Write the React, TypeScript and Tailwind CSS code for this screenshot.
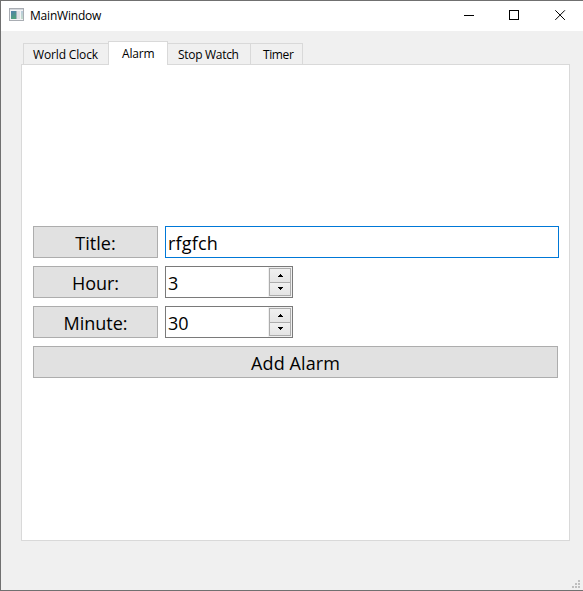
import React from "react";

function AppIcon() {
  return (
    <svg width="15" height="13" viewBox="0 0 15 13" shapeRendering="crispEdges">
      <defs>
        <linearGradient id="pane" x1="0" y1="0" x2="0.4" y2="1">
          <stop offset="0" stopColor="#4f7fae" />
          <stop offset="1" stopColor="#4fa07c" />
        </linearGradient>
        <linearGradient id="side" x1="0" y1="0" x2="0" y2="1">
          <stop offset="0" stopColor="#b9cbdc" />
          <stop offset="1" stopColor="#c3dccb" />
        </linearGradient>
      </defs>
      <rect width="15" height="13" fill="#a9adb3" />
      <rect x="1" y="1" width="13" height="11" fill="#f2f3f5" />
      <rect x="1" y="1" width="13" height="1" fill="#d3d7dc" />
      <rect x="2" y="3" width="5" height="8" fill="url(#pane)" />
      <rect x="7" y="3" width="1" height="8" fill="#9fb3bd" />
      <rect x="8" y="3" width="3" height="8" fill="#dfe1e4" />
      <rect x="12" y="3" width="2" height="8" fill="url(#side)" />
    </svg>
  );
}

function TitleBar() {
  return (
    <header className="flex h-[30px] bg-white">
      <div className="flex flex-1 pt-[7px] pl-2">
        <AppIcon />
        <span className="ml-1.5 h-4 text-xs leading-4 tracking-[-0.2px]">MainWindow</span>
      </div>
      <svg className="mt-[9px] mr-[17px] shrink-0" width="103" height="11" viewBox="0 0 103 11" fill="none" stroke="#000">
        <path d="M1 5.5h10M46.5.5h9v9h-9z" shapeRendering="crispEdges" />
        <path d="M92.3.3l9.6 9.6M101.9.3l-9.6 9.6" />
      </svg>
    </header>
  );
}

function Tab({ className, children }: { className: string; children: React.ReactNode }) {
  return (
    <div className={`border-t border-r border-[#d9d9d9] text-xs leading-4 whitespace-nowrap ${className}`}>
      {children}
    </div>
  );
}

function FieldButton({ className, children }: { className: string; children: React.ReactNode }) {
  return (
    <button className={`flex h-8 justify-center border border-[#adadad] bg-[#e1e1e1] text-lg leading-8 whitespace-nowrap ${className}`}>
      {children}
    </button>
  );
}

function SpinBox({ value }: { value: number }) {
  return (
    <div className="flex h-8 w-32 border border-[#7a7a7a] bg-white">
      <span className="flex-1 pl-0.5 text-lg leading-8">{value}</span>
      <div className="flex h-[30px] w-6 flex-col bg-[#f0f0f0] p-px">
        <div className="flex h-[15px] items-center justify-center border border-[#acacac] bg-gradient-to-b from-[#f0f0f0] to-[#e5e5e5]">
          <svg width="5" height="3" shapeRendering="crispEdges"><path d="M2 0h1v1h1v1h1v1H0V2h1V1h1z" /></svg>
        </div>
        <div className="flex h-[13px] justify-center border-x border-b border-[#acacac] bg-gradient-to-b from-[#f0f0f0] to-[#e5e5e5] pt-1">
          <svg width="5" height="3" shapeRendering="crispEdges"><path d="M0 0h5v1H4v1H3v1H2V2H1V1H0z" /></svg>
        </div>
      </div>
    </div>
  );
}

function SizeGrip() {
  return (
    <svg width="8" height="8" fill="#bfbfbf" shapeRendering="crispEdges">
      <path d="M6 0h2v2H6zM3 3h2v2H3zM6 3h2v2H6zM0 6h2v2H0zM3 6h2v2H3zM6 6h2v2H6z" />
    </svg>
  );
}

export default function App() {
  return (
    <div className="flex h-[591px] w-[583px] flex-col overflow-hidden border-y border-l border-[#707070] bg-[#f0f0f0] font-['Open_Sans','Noto_Sans',sans-serif] text-black">
      <TitleBar />
      <main className="flex flex-1 flex-col pt-2.5 pl-5">
        <nav className="flex h-[23px] items-end pl-0.5">
          <Tab className="h-[21px] w-[85px] border-r-0 border-l pt-[3px] pl-[9px] tracking-[-0.15px]">World Clock</Tab>
          <Tab className="z-10 -mb-px h-6 w-[60px] border-l bg-white pt-1 pl-[13px] tracking-[-0.2px]">Alarm</Tab>
          <Tab className="h-[21px] w-[83px] pt-[3px] pl-[10px] tracking-[-0.3px]">Stop Watch</Tab>
          <Tab className="h-[21px] w-[52px] pt-[3px] pl-3 tracking-[-0.4px]">Timer</Tab>
        </nav>
        <section className="flex h-[477px] w-[549px] flex-col gap-2 border border-[#d9d9d9] bg-white pt-[161px] pl-[11px]">
          <div className="flex gap-[7px]">
            <FieldButton className="w-[125px]">Title:</FieldButton>
            <input
              className="h-8 w-[394px] border border-[#0078d7] bg-white pt-0.5 pl-0.5 text-lg leading-7 tracking-[0.2px] outline-none"
              defaultValue="rfgfch"
            />
          </div>
          <div className="flex gap-[7px]">
            <FieldButton className="w-[125px]">Hour:</FieldButton>
            <SpinBox value={3} />
          </div>
          <div className="flex gap-[7px]">
            <FieldButton className="w-[125px]">Minute:</FieldButton>
            <SpinBox value={30} />
          </div>
          <FieldButton className="w-[525px] tracking-[0.1px]">Add Alarm</FieldButton>
        </section>
        <footer className="flex flex-1 items-end justify-end pr-[3px] pb-0.5">
          <SizeGrip />
        </footer>
      </main>
    </div>
  );
}
